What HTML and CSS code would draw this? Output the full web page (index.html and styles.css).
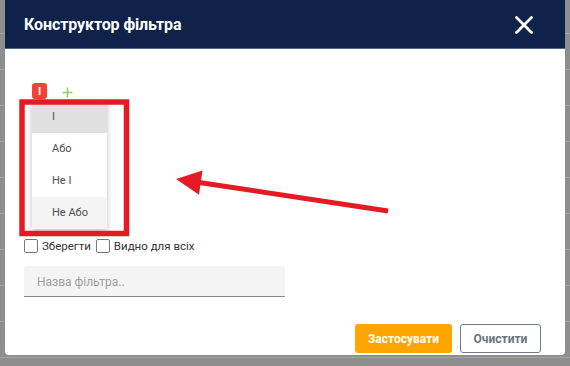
FILE: index.html
```html
<!DOCTYPE html>
<html lang="uk">
<head>
  <meta charset="UTF-8">
  <meta name="viewport" content="width=device-width, initial-scale=1.0">
  <title>Конструктор фільтра</title>
  <link rel="stylesheet" href="styles.css">
</head>
<body>
  <div class="modal">
    <div class="modal-header">
      <h1 class="modal-title">Конструктор фільтра</h1>
      <svg class="close" width="18" height="18" viewBox="0 0 18 18">
        <path d="M1.5 1.5 L16.5 16.5 M16.5 1.5 L1.5 16.5" stroke="#fff" stroke-width="2.8" stroke-linecap="round"/>
      </svg>
    </div>

    <div class="modal-body">
      <div class="builder">
        <div class="group-row">
          <span class="badge">І</span>
          <svg class="plus" width="11" height="11" viewBox="0 0 11 11">
            <path d="M5.5 0.5 V10.5 M0.5 5.5 H10.5" stroke="#9ccc65" stroke-width="1.6"/>
          </svg>
        </div>
        <ul class="menu">
          <li class="menu-item active">І</li>
          <li class="menu-item">Або</li>
          <li class="menu-item">Не І</li>
          <li class="menu-item hover">Не Або</li>
        </ul>
      </div>

      <div class="checks">
        <label class="check"><span class="box"></span>Зберегти</label>
        <label class="check"><span class="box"></span>Видно для всіх</label>
      </div>

      <input class="name-input" type="text" placeholder="Назва фільтра..">

      <div class="modal-footer">
        <button class="btn btn-apply">Застосувати</button>
        <button class="btn btn-clear">Очистити</button>
      </div>
    </div>
  </div>

  <!-- annotation drawn over the screenshot -->
  <svg class="annotation" width="570" height="366" viewBox="0 0 570 366">
    <rect x="22" y="102" width="104.5" height="131.5" fill="none" stroke="#e31b23" stroke-width="5.5"/>
    <line x1="196" y1="182" x2="388" y2="211" stroke="#e31b23" stroke-width="5"/>
    <polygon points="176,179 202.5,170.5 199,194.8" fill="#e31b23"/>
  </svg>
</body>
</html>
```

FILE: styles.css
```css
body {
  margin: 0;
  width: 570px;
  height: 366px;
  overflow: hidden;
  font-family: Roboto, "Noto Sans", sans-serif;
  background-color: #8e8e8e;
  background-image: repeating-linear-gradient(to bottom, transparent 0, transparent 33px, #a4a4a4 33px, #a4a4a4 34px, transparent 34px, transparent 36px);
  position: relative;
}
.modal {
  margin-left: 5px;
  width: 560px;
  height: 355px;
  background: #fff;
  border-radius: 0 0 4px 4px;
  overflow: hidden;
}
.modal-header {
  height: 48px;
  background: #0f2249;
  border-bottom: 1px solid #56658a;
  display: flex;
  align-items: center;
  justify-content: space-between;
  padding: 0 32px 0 19px;
}
.modal-title {
  margin: 0;
  color: #fff;
  font-size: 16px;
  font-weight: 700;
  letter-spacing: -0.1px;
}
.close {
  display: block;
  margin-top: 1px;
}
.modal-body {
  padding: 34px 24px 0 19px;
}
.builder {
  position: relative;
  height: 155px;
}
.group-row {
  display: flex;
  align-items: center;
  padding-left: 8px;
}
.badge {
  width: 15px;
  height: 16px;
  border-radius: 3px;
  background: #f44336;
  color: #fff;
  font-size: 11px;
  font-weight: 700;
  display: flex;
  align-items: center;
  justify-content: center;
}
.plus {
  margin-left: 15px;
  margin-top: 2px;
}
.menu {
  position: absolute;
  top: 18px;
  left: 8px;
  width: 75px;
  margin: 0;
  padding: 0;
  list-style: none;
  background: #fff;
  box-shadow: 0 2px 6px rgba(0, 0, 0, 0.25);
}
.menu-item {
  height: 32px;
  line-height: 32px;
  padding-left: 20px;
  font-size: 11px;
  color: #505050;
}
.menu-item.active {
  background: #e0e0e0;
}
.menu-item.hover {
  background: #f4f4f4;
}
.checks {
  display: flex;
  align-items: center;
  height: 16px;
  font-size: 11.5px;
  color: #333;
}
.check {
  display: flex;
  align-items: center;
  margin-right: 5px;
}
.box {
  width: 12px;
  height: 12px;
  border: 1px solid #777;
  border-radius: 2px;
  margin-right: 4px;
  background: #fff;
}
.name-input {
  display: block;
  box-sizing: border-box;
  margin-top: 12px;
  width: 261px;
  height: 31px;
  padding: 2px 13px 0;
  border: none;
  border-bottom: 1px solid #8a8a8a;
  border-radius: 3px 3px 0 0;
  background: #f4f4f4;
  font-family: Roboto, sans-serif;
  font-size: 12px;
  outline: none;
}
.name-input::placeholder {
  color: #9e9e9e;
}
.modal-footer {
  display: flex;
  justify-content: flex-end;
  gap: 8px;
  margin-top: 27px;
}
.btn {
  height: 29px;
  border-radius: 3px;
  font-family: Roboto, sans-serif;
  font-size: 12px;
  font-weight: 700;
  padding: 0;
}
.btn-apply {
  width: 97px;
  background: #ffa500;
  border: none;
  color: #fff;
}
.btn-clear {
  width: 81px;
  background: #fff;
  border: 1px solid #6f7b87;
  color: #6c757d;
}
.annotation {
  position: absolute;
  top: 0;
  left: 0;
  pointer-events: none;
}
```
